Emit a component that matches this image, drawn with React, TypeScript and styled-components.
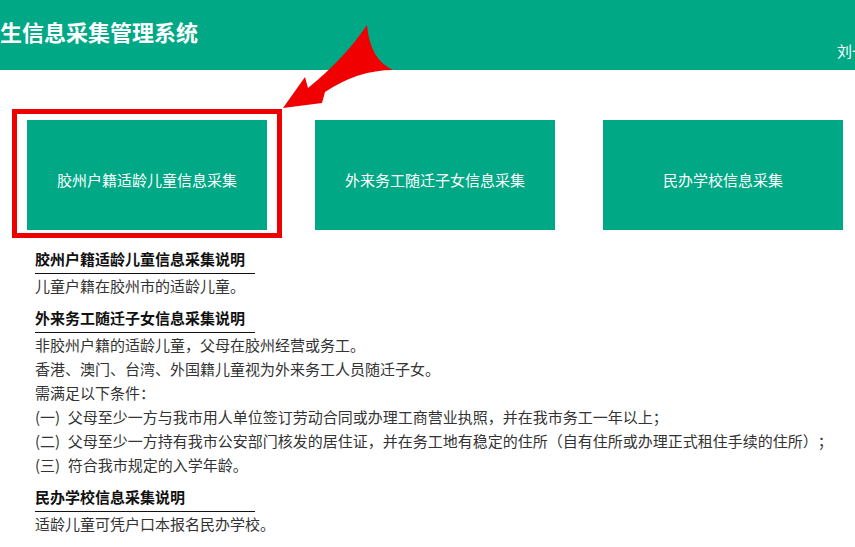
import styled, { createGlobalStyle } from 'styled-components';

const GREEN = '#00a886';

const GlobalStyle = createGlobalStyle`
  html, body {
    margin: 0;
    padding: 0;
    background: #ffffff;
    overflow: hidden;
  }
  body {
    font-family: "Noto Sans CJK SC", "Noto Sans", "Liberation Sans", sans-serif;
    text-spacing-trim: space-all;
  }
`;

const Page = styled.div`
  position: relative;
  width: 855px;
  height: 547px;
  overflow: hidden;
`;

const Header = styled.header`
  height: 70px;
  background: ${GREEN};
  display: flex;
  justify-content: space-between;
  align-items: flex-start;
  overflow: hidden;
`;

const Title = styled.h1`
  margin: 20px 0 0 0;
  font-size: 22px;
  line-height: 22px;
  font-weight: 700;
  color: #ffffff;
  white-space: nowrap;
`;

const User = styled.div`
  margin: 42px -12px 0 0;
  font-size: 15px;
  line-height: 18px;
  color: #ffffff;
  white-space: nowrap;
`;

const Main = styled.main`
  padding: 50px 0 0 27px;
`;

const CardRow = styled.div`
  display: flex;
  gap: 48px;
`;

const CardWrap = styled.div`
  position: relative;
`;

const Card = styled.a`
  width: 240px;
  height: 110px;
  box-sizing: border-box;
  padding-top: 51px;
  background: ${GREEN};
  color: #ffffff;
  font-size: 15px;
  line-height: 18px;
  text-align: center;
  text-decoration: none;
  display: block;
  cursor: pointer;
`;

const Highlight = styled.div`
  position: absolute;
  left: -15px;
  top: -11px;
  width: 270px;
  height: 129px;
  box-sizing: border-box;
  border: 5px solid #ee0000;
  pointer-events: none;
`;

const Notes = styled.div`
  padding: 19px 0 0 8px;
`;

const Section = styled.section`
  & + & {
    margin-top: 10px;
  }
`;

const NoteTitle = styled.h4`
  margin: 0;
  width: 220px;
  padding-bottom: 4px;
  border-bottom: 1px solid #111;
  font-size: 15px;
  line-height: 20px;
  font-weight: 700;
  color: #111;
`;

const Line = styled.p`
  margin: 0;
  font-size: 15px;
  line-height: 24px;
  color: #333;
  white-space: nowrap;
`;

const Arrow = styled.svg`
  position: absolute;
  left: 270px;
  top: 0;
  width: 140px;
  height: 120px;
  pointer-events: none;
`;

const cards = ['胶州户籍适龄儿童信息采集', '外来务工随迁子女信息采集', '民办学校信息采集'];

const notes = [
  {
    title: '胶州户籍适龄儿童信息采集说明',
    lines: ['儿童户籍在胶州市的适龄儿童。'],
  },
  {
    title: '外来务工随迁子女信息采集说明',
    lines: [
      '非胶州户籍的适龄儿童，父母在胶州经营或务工。',
      '香港、澳门、台湾、外国籍儿童视为外来务工人员随迁子女。',
      '需满足以下条件：',
      '(一)\u2002父母至少一方与我市用人单位签订劳动合同或办理工商营业执照，并在我市务工一年以上；',
      '(二)\u2002父母至少一方持有我市公安部门核发的居住证，并在务工地有稳定的住所（自有住所或办理正式租住手续的住所）；',
      '(三)\u2002符合我市规定的入学年龄。',
    ],
  },
  {
    title: '民办学校信息采集说明',
    lines: ['适龄儿童可凭户口本报名民办学校。'],
  },
];

export default function App() {
  return (
    <Page>
      <GlobalStyle />
      <Header>
        <Title>生信息采集管理系统</Title>
        <User>刘一</User>
      </Header>
      <Main>
        <CardRow>
          {cards.map((c, i) => (
            <CardWrap key={c}>
              <Card>{c}</Card>
              {i === 0 && <Highlight />}
            </CardWrap>
          ))}
        </CardRow>
        <Notes>
          {notes.map((n) => (
            <Section key={n.title}>
              <NoteTitle>{n.title}</NoteTitle>
              {n.lines.map((l) => (
                <Line key={l}>{l}</Line>
              ))}
            </Section>
          ))}
        </Notes>
      </Main>
      <Arrow viewBox="0 0 140 120">
        <path
          d="M 97 25 Q 100 60 123 70 Q 88 70 55 92 L 52 103 L 13 108 L 35 77 L 38 88 Q 75 58 97 25 Z"
          fill="#f00000"
        />
      </Arrow>
    </Page>
  );
}
